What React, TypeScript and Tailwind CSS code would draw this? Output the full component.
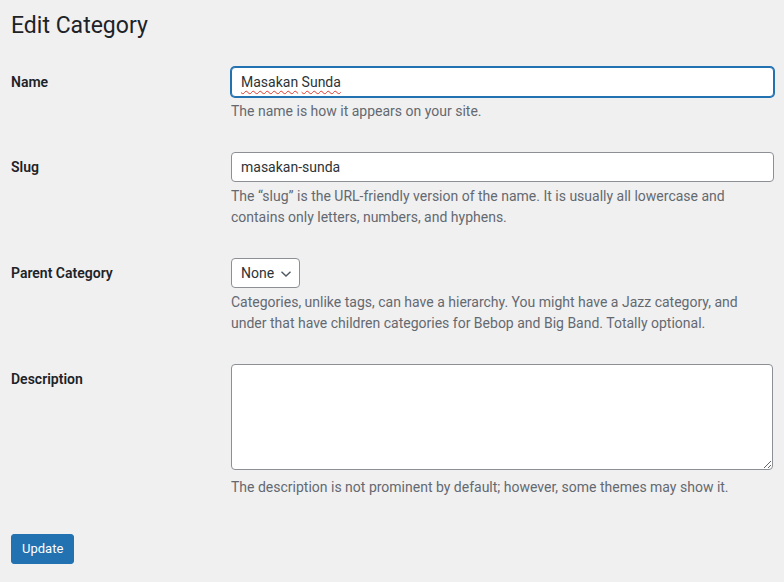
import React from "react";

const font = { fontFamily: "Roboto, 'Noto Sans', sans-serif" };

function Row({ label, children, className = "" }: { label: string; children: React.ReactNode; className?: string }) {
  return (
    <div className={"flex " + className}>
      <div className="w-[220px] shrink-0 h-[30px] flex items-center text-[14px] font-semibold text-[#1d2327]">
        {label}
      </div>
      <div className="flex-1 pr-[10px] flex flex-col items-start">{children}</div>
    </div>
  );
}

function Desc({ children, className = "mt-[4px]" }: { children: React.ReactNode; className?: string }) {
  return <p className={"text-[14px] leading-[21px] text-[#646970] " + className}>{children}</p>;
}

export default function App() {
  return (
    <div style={font} className="min-h-[582px] w-full bg-[#f0f0f1] pl-[11px] pt-[11px] text-[#1d2327]">
      <h1 className="text-[23px] leading-[30px] font-normal text-[#1d2327]">Edit Category</h1>

      <div className="mt-[26px] flex flex-col">
        <Row label="Name">
          <div className="w-full h-[30px] rounded-[4px] border border-[#2271b1] shadow-[0_0_0_1px_#2271b1] bg-white px-[9px] flex items-center text-[14px] text-[#2c3338]">
            <span className="underline decoration-wavy decoration-[#e0392b] decoration-1 underline-offset-[3px]">Masakan</span>
            <span>&nbsp;</span>
            <span className="underline decoration-wavy decoration-[#e0392b] decoration-1 underline-offset-[3px]">Sunda</span>
          </div>
          <Desc>The name is how it appears on your site.</Desc>
        </Row>

        <Row label="Slug" className="mt-[30px]">
          <input
            readOnly
            value="masakan-sunda"
            className="w-full h-[30px] rounded-[4px] border border-[#8c8f94] bg-white px-[9px] text-[14px] text-[#2c3338] outline-none"
          />
          <Desc>
            The “slug” is the URL-friendly version of the name. It is usually all lowercase and contains only letters, numbers, and hyphens.
          </Desc>
        </Row>

        <Row label="Parent Category" className="mt-[30px]">
          <div className="h-[30px] w-[69px] rounded-[4px] border border-[#8c8f94] bg-white pl-[9px] flex items-center text-[14px] text-[#2c3338]">
            <span>None</span>
            <svg width="12" height="8" viewBox="0 0 12 8" className="ml-[6px] mt-[1px]">
              <path d="M1.5 1.8 L6 6 L10.5 1.8" fill="none" stroke="#50575e" strokeWidth="1.4" />
            </svg>
          </div>
          <Desc>
            Categories, unlike tags, can have a hierarchy. You might have a Jazz category, and under that have children categories for Bebop and Big Band. Totally optional.
          </Desc>
        </Row>

        <Row label="Description" className="mt-[30px]">
          <textarea
            readOnly
            className="block w-[542px] h-[106px] rounded-[4px] border border-[#8c8f94] bg-white px-[8px] py-[2px] text-[14px] outline-none"
          />
          <Desc className="mt-[7px]">The description is not prominent by default; however, some themes may show it.</Desc>
        </Row>
      </div>

      <button className="mt-[36px] h-[30px] rounded-[3px] border border-[#2271b1] bg-[#2271b1] px-[10px] text-[13px] leading-[28px] text-white">
        Update
      </button>
    </div>
  );
}
